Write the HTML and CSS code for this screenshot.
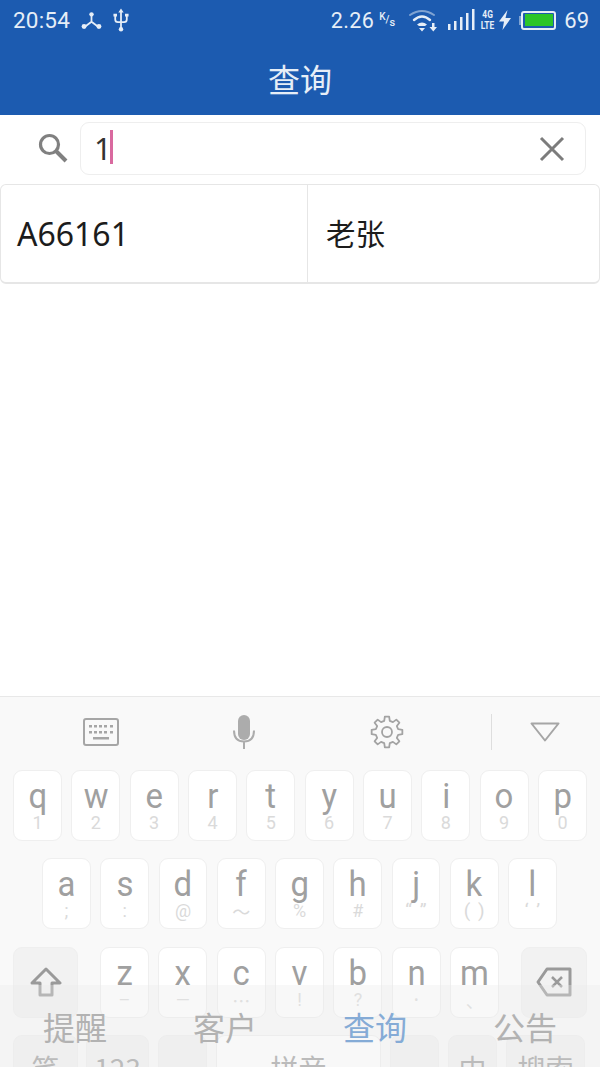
FILE: index.html
```html
<!DOCTYPE html>
<html lang="zh">
<head>
<meta charset="utf-8">
<title>查询</title>
<link rel="stylesheet" href="styles.css">
</head>
<body>
<div class="screen">
  <header class="appbar">
    <div class="status">
      <span class="clock">20:54</span>
      <svg class="ic-share" width="21" height="20" viewBox="0 0 24 22"><g fill="none" stroke="#e6eef7" stroke-width="2"><path d="M12 5v8M12 13l-8 6M12 13l8 6"/></g><g fill="#e6eef7"><circle cx="12" cy="4.500" r="2.500"/><circle cx="3.500" cy="18.500" r="2.800"/><circle cx="20.500" cy="18.500" r="2.800"/></g></svg>
      <svg class="ic-usb" width="16" height="24" viewBox="0 0 18 26"><g fill="none" stroke="#e6eef7" stroke-width="2"><path d="M9 3v20M2.500 8v4.500q0 3 3 3h7q3 0 3-3V8"/></g><path fill="#e6eef7" d="M9 0l3 4.500H6zM.5 6h4v3h-4zM13.500 6h4v3h-4z"/><circle cx="9" cy="23.500" r="2.500" fill="#e6eef7"/></svg>
      <div class="status-right">
        <span class="speed">2.26</span>
        <span class="unit"><sup>K</sup>/<sub>s</sub></span>
        <svg class="ic-wifi" width="28" height="24" viewBox="0 0 28 24"><g fill="none" stroke-linecap="round"><path d="M1 7Q13-1 25 7" stroke="#7fa3d2" stroke-width="2"/><path d="M5 12Q13 5 21 12" stroke="#e6eef7" stroke-width="2.400"/></g><path fill="#e6eef7" d="M8 16.500Q13 12.500 18 16.500L16 18H10zM10 20h6l-3 3.500zM23 15h2.500v4H28l-3.700 4.500L20.500 19H23z"/></svg>
        <svg class="ic-signal" width="27" height="22" viewBox="0 0 27 22" fill="#e6eef7"><rect x="0" y="15" width="2.500" height="6"/><rect x="6" y="12" width="2.500" height="9"/><rect x="12" y="8" width="2.500" height="13"/><rect x="18" y="4" width="2.500" height="17"/><rect x="24" y="0" width="2.500" height="21"/></svg>
        <span class="net"><b>4G</b><b>LTE</b></span>
        <svg class="ic-bolt" width="12" height="20" viewBox="0 0 12 20"><path fill="#e6eef7" d="M8.500 0L0 11.500h5L3.500 20 12 8H6.500z"/></svg>
        <span class="battery"><span class="battery-fill"></span></span>
        <span class="level">69</span>
      </div>
    </div>
    <h1 class="title">查询</h1>
  </header>

  <section class="search">
    <svg class="ic-search" width="30" height="30" viewBox="0 0 30 30"><g fill="none" stroke="#808080"><circle cx="11.500" cy="11.500" r="9" stroke-width="3.200"/><path d="M18 18l10 10" stroke-width="4"/></g></svg>
    <div class="field">
      <span class="field-value">1</span><span class="caret"></span>
      <svg class="ic-clear" width="26" height="26" viewBox="0 0 26 26"><path d="M2 2l22 22M24 2L2 24" stroke="#7c7c7c" stroke-width="3" fill="none"/></svg>
    </div>
  </section>

  <section class="result">
    <div class="cell cell-code">A66161</div>
    <div class="cell cell-name">老张</div>
  </section>

  <section class="keyboard">
    <div class="kb-tools">
      <svg class="t-kb" width="36" height="28" viewBox="0 0 36 28"><rect x="1" y="1" width="34" height="26" rx="2" fill="none" stroke="#a6a6a6" stroke-width="2"/><g fill="#a6a6a6"><rect x="6" y="7" width="3" height="2.500"/><rect x="11" y="7" width="3" height="2.500"/><rect x="16" y="7" width="3" height="2.500"/><rect x="21" y="7" width="3" height="2.500"/><rect x="27" y="7" width="3" height="2.500"/><rect x="6" y="13" width="3" height="2.500"/><rect x="11" y="13" width="3" height="2.500"/><rect x="16" y="13" width="3" height="2.500"/><rect x="21" y="13" width="3" height="2.500"/><rect x="27" y="13" width="3" height="2.500"/><rect x="10" y="19" width="16" height="2.500"/></g></svg>
      <svg class="t-mic" width="22" height="34" viewBox="0 0 22 34"><rect x="5" y="0" width="12" height="25" rx="6" fill="#acacac"/><path d="M1 15.500q0 11 10 11t10-11M11 26v8" fill="none" stroke="#acacac" stroke-width="2"/></svg>
      <svg class="t-gear" width="34" height="34" viewBox="-17 -17 34 34"><polygon fill="none" stroke="#a3a3a3" stroke-width="1.800" stroke-linejoin="round" points="11.160,-2.780 15.350,-2.160 15.350,2.160 11.160,2.780 9.860,5.920 12.380,9.330 9.330,12.380 5.920,9.860 2.780,11.160 2.160,15.350 -2.160,15.350 -2.780,11.160 -5.920,9.860 -9.330,12.380 -12.380,9.330 -9.860,5.920 -11.160,2.780 -15.350,2.160 -15.350,-2.160 -11.160,-2.780 -9.860,-5.920 -12.380,-9.330 -9.330,-12.380 -5.920,-9.860 -2.780,-11.160 -2.160,-15.350 2.160,-15.350 2.780,-11.160 5.920,-9.860 9.330,-12.380 12.380,-9.330 9.860,-5.920"/><circle r="5" fill="none" stroke="#a3a3a3" stroke-width="1.800"/></svg>
      <span class="t-divider"></span>
      <svg class="t-hide" width="30" height="20" viewBox="0 0 30 20"><path d="M1.500 1.500h27L15 18.500z" fill="none" stroke="#a6a6a6" stroke-width="2" stroke-linejoin="round"/></svg>
    </div>

    <div class="kb-rows">
      <div class="row row-top">
        <div class="key"><span class="ch">q</span><span class="sub">1</span></div>
        <div class="key"><span class="ch">w</span><span class="sub">2</span></div>
        <div class="key"><span class="ch">e</span><span class="sub">3</span></div>
        <div class="key"><span class="ch">r</span><span class="sub">4</span></div>
        <div class="key"><span class="ch">t</span><span class="sub">5</span></div>
        <div class="key"><span class="ch">y</span><span class="sub">6</span></div>
        <div class="key"><span class="ch">u</span><span class="sub">7</span></div>
        <div class="key"><span class="ch">i</span><span class="sub">8</span></div>
        <div class="key"><span class="ch">o</span><span class="sub">9</span></div>
        <div class="key"><span class="ch">p</span><span class="sub">0</span></div>
      </div>
      <div class="row row-mid">
        <div class="key"><span class="ch">a</span><span class="sub">;</span></div>
        <div class="key"><span class="ch">s</span><span class="sub">:</span></div>
        <div class="key"><span class="ch">d</span><span class="sub">@</span></div>
        <div class="key"><span class="ch">f</span><span class="sub sub-cjk">～</span></div>
        <div class="key"><span class="ch">g</span><span class="sub">%</span></div>
        <div class="key"><span class="ch">h</span><span class="sub">#</span></div>
        <div class="key"><span class="ch">j</span><span class="sub sub-wide">“ ”</span></div>
        <div class="key"><span class="ch">k</span><span class="sub sub-wide">( )</span></div>
        <div class="key"><span class="ch">l</span><span class="sub sub-wide">‘ ’</span></div>
      </div>
      <div class="row row-low">
        <div class="key fn k-shift"><svg width="32" height="30" viewBox="0 0 32 30"><path d="M16 2L30 16h-8v12H10V16H2z" fill="none" stroke="#9a9a9a" stroke-width="3" stroke-linejoin="round"/></svg></div>
        <div class="key"><span class="ch">z</span><span class="sub">–</span></div>
        <div class="key"><span class="ch">x</span><span class="sub">—</span></div>
        <div class="key"><span class="ch">c</span><span class="sub sub-cjk">…</span></div>
        <div class="key"><span class="ch">v</span><span class="sub">!</span></div>
        <div class="key"><span class="ch">b</span><span class="sub">?</span></div>
        <div class="key"><span class="ch">n</span><span class="sub sub-dot">•</span></div>
        <div class="key"><span class="ch">m</span><span class="sub sub-cjk">、</span></div>
        <div class="key fn k-back"><svg width="36" height="30" viewBox="0 0 36 30"><path d="M11 2h23v26H11L2 15z" fill="none" stroke="#9a9a9a" stroke-width="3" stroke-linejoin="round"/><path d="M16 10l10 10M26 10L16 20" stroke="#9a9a9a" stroke-width="2.500"/></svg></div>
      </div>
      <div class="row row-bottom">
        <div class="key fn w65"><span class="lbl">笔</span></div>
        <div class="key fn w63"><span class="lbl">123</span></div>
        <div class="key fn w49"></div>
        <div class="key w164"><span class="lbl">拼音</span></div>
        <div class="key fn w49"></div>
        <div class="key fn w49"><span class="lbl">中</span></div>
        <div class="key fn w79"><span class="lbl">搜索</span></div>
      </div>
    </div>
  </section>

  <nav class="tabs">
    <span class="tab">提醒</span>
    <span class="tab">客户</span>
    <span class="tab tab-on">查询</span>
    <span class="tab">公告</span>
  </nav>
</div>
</body>
</html>
```
FILE: styles.css
```css
* { box-sizing: border-box; }
html, body { margin: 0; padding: 0; }
body {
  background: #fff;
  font-family: "Noto Sans", "Noto Sans CJK SC", sans-serif;
}
.screen {
  position: relative;
  width: 600px;
  height: 1067px;
  overflow: hidden;
  background: #fff;
}

/* app bar */
.appbar {
  height: 115px;
  background: #1c5bb0;
  color: #e6eef7;
}
.status {
  height: 40px;
  display: flex;
  align-items: center;
  padding: 0 11px 0 13px;
  font-family: Roboto, "Liberation Sans", sans-serif;
}
.clock { font-size: 22.500px; letter-spacing: .2px; }
.ic-share { margin-left: 11px; }
.ic-usb { margin-left: 11px; }
.status-right {
  margin-left: auto;
  display: flex;
  align-items: center;
}
.speed { font-size: 21.500px; letter-spacing: .4px; }
.unit {
  width: 17px;
  margin-left: 5px;
  font-size: 10px;
  line-height: 1;
  display: flex;
  align-items: center;
  font-weight: 500;
}
.unit sup { align-self: flex-start; margin-top: -3px; font-size: 10px; vertical-align: baseline; }
.unit sub { align-self: flex-end; margin-bottom: -3px; font-size: 11px; vertical-align: baseline; }
.ic-wifi { margin-left: 13px; }
.ic-signal { margin-left: 11px; }
.net {
  width: 14px;
  margin-left: 5px;
  display: flex;
  flex-direction: column;
  align-items: center;
  font-size: 10.500px;
  line-height: 11px;
}
.net b { font-weight: 700; transform: scaleX(.8); }
.ic-bolt { margin-left: 5px; }
.battery {
  position: relative;
  width: 35px;
  height: 19px;
  margin-left: 10px;
  padding: 1.500px;
  border: 2px solid #e6eef7;
  border-radius: 3px;
  display: flex;
}
.battery::before {
  content: "";
  position: absolute;
  left: -4px;
  top: 3px;
  width: 2px;
  height: 9px;
  background: #7fa3d2;
}
.battery-fill { flex: 1; background: #2cc52a; }
.level { margin-left: 8px; font-size: 22px; }
.title {
  margin: 0;
  height: 75px;
  text-align: center;
  font-size: 32px;
  line-height: 76px;
  font-weight: 400;
  font-family: "Noto Sans CJK SC", sans-serif;
}

/* search */
.search {
  height: 69px;
  display: flex;
  align-items: flex-start;
  padding: 7px 14px 0 38px;
}
.ic-search { margin: 11px 12px 0 0; flex: none; }
.field {
  flex: 1;
  height: 53px;
  display: flex;
  align-items: center;
  padding: 0 20px 0 13px;
  border: 1px solid #eeeeee;
  border-radius: 9px;
}
.field-value { font-size: 31px; color: #333; line-height: 1; }
.caret { width: 3px; height: 34px; margin: -3px 0 0 -2px; background: #d9699f; }
.ic-clear { margin-left: auto; }

/* result */
.result {
  height: 100px;
  display: flex;
  border: 1px solid #e6e6e6;
  border-bottom-width: 2px;
  border-radius: 6px;
}
.cell {
  display: flex;
  align-items: center;
  color: #1c1c1c;
}
.cell-code {
  width: 307px;
  padding-left: 16px;
  font-size: 32px;
  border-right: 1px solid #e6e6e6;
}
.cell-name {
  flex: 1;
  padding-left: 18px;
  padding-bottom: 3px;
  font-size: 29.500px;
  font-family: "Noto Sans CJK SC", sans-serif;
}

/* keyboard */
.keyboard {
  position: absolute;
  left: 0;
  top: 696px;
  width: 600px;
  height: 371px;
  background: #f9f9f9;
  border-top: 1px solid #e8e8e8;
  overflow: hidden;
}
.kb-tools {
  height: 73px;
  display: flex;
  align-items: center;
  padding-left: 83px;
  padding-bottom: 4px;
}
.t-mic { margin-left: 114px; }
.t-gear { margin-left: 115px; }
.t-divider { width: 1px; height: 36px; margin-left: 87px; background: #dedede; }
.t-hide { margin-left: 38px; margin-top: 0; }
.kb-rows {
  display: flex;
  flex-direction: column;
  gap: 17.400px;
}
.row {
  display: flex;
  height: 71px;
  flex: none;
  gap: 9.300px;
}
.row-top { padding: 0 13px; }
.row-mid { padding: 0 43px 0 42px; }
.row-low { padding: 0 13px; }
.key {
  flex: 1 1 0;
  min-width: 0;
  display: flex;
  flex-direction: column;
  align-items: center;
  background: #fff;
  border: 1px solid #efefef;
  border-radius: 9px;
  color: #a0a0a0;
  font-family: Roboto, "Noto Sans CJK SC", sans-serif;
}
.ch { font-size: 35px; line-height: 34px; margin-top: 9px; transform: scaleX(.94); }
.sub { font-size: 18px; line-height: 18px; margin-top: 0; color: #dadada; white-space: nowrap; }
.sub-cjk { font-family: "Noto Sans CJK SC", sans-serif; }
.sub-wide { word-spacing: 3px; font-size: 19px; }
.sub-dot { font-size: 12px; }
.fn { background: #f2f2f2; justify-content: center; }
.k-shift { flex: 0 0 65px; margin-right: 12.500px; }
.k-back { flex: 0 0 66px; margin-left: 12.500px; }
.row-bottom { padding: 0 13px; gap: 9px; }
.key.w49 { flex: 0 0 49px; }
.key.w63 { flex: 0 0 63px; margin-left: -1px; }
.key.w65 { flex: 0 0 65px; }
.key.w79 { flex: 0 0 79px; }
.key.w164 { flex: 0 0 165px; }
.row-bottom .key { justify-content: flex-start; }
.lbl { font-size: 28px; line-height: 40px; margin-top: 12px; color: #a2a2a2; font-family: "Noto Sans CJK SC", sans-serif; }

/* bottom tabs lie over the keyboard */
.tabs {
  position: absolute;
  left: 0;
  right: 0;
  bottom: 0;
  height: 82px;
  display: flex;
  align-items: flex-start;
  background: rgba(236, 236, 236, .35);
}
.tab {
  flex: 1;
  text-align: center;
  font-size: 32px;
  line-height: 40px;
  margin-top: 21px;
  color: #b2b2b2;
  font-family: "Noto Sans CJK SC", sans-serif;
}
.tab-on { color: #85abd6; }
```
